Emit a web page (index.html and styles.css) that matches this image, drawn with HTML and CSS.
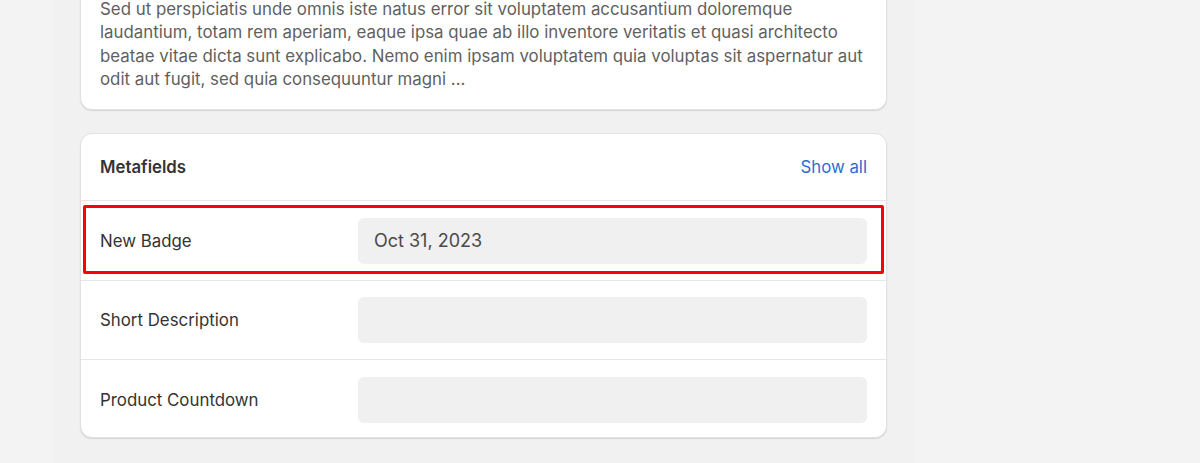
FILE: index.html
```html
<!DOCTYPE html>
<html lang="en">
<head>
<meta charset="utf-8">
<title>Metafields</title>
<link rel="stylesheet" href="styles.css">
</head>
<body>
<div class="page">
  <main class="main">
    <section class="card card-desc">
      <p class="desc">Sed ut perspiciatis unde omnis iste natus error sit voluptatem accusantium doloremque laudantium, totam rem aperiam, eaque ipsa quae ab illo inventore veritatis et quasi architecto beatae vitae dicta sunt explicabo. Nemo enim ipsam voluptatem quia voluptas sit aspernatur aut odit aut fugit, sed quia consequuntur magni ...</p>
    </section>
    <section class="card card-meta">
      <header class="meta-head">
        <h2 class="meta-title">Metafields</h2>
        <a class="show-all" href="#">Show all</a>
      </header>
      <div class="meta-row highlighted">
        <span class="meta-label">New Badge</span>
        <div class="meta-input">Oct 31, 2023</div>
        <div class="highlight-box"></div>
      </div>
      <div class="meta-row">
        <span class="meta-label">Short Description</span>
        <div class="meta-input"></div>
      </div>
      <div class="meta-row">
        <span class="meta-label">Product Countdown</span>
        <div class="meta-input"></div>
      </div>
    </section>
  </main>
</div>
</body>
</html>
```

FILE: styles.css
```css
* { box-sizing: border-box; }
html, body {
  margin: 0;
  padding: 0;
  height: 100%;
}
body {
  background: #f3f3f3;
  font-family: Inter, "Noto Sans", sans-serif;
  color: #303030;
  overflow: hidden;
}
.page {
  display: flex;
  height: 100%;
}
.main {
  margin-left: 53px;
  width: 860px;
  background: #f1f1f1;
  padding: 0 26px 0 27px;
  display: flex;
  flex-direction: column;
  gap: 23px;
  margin-top: -20px;
}
.card {
  background: #ffffff;
  border: 1px solid #e1e1e1;
  border-radius: 12px;
  box-shadow: 0 1px 1px rgba(0,0,0,0.12);
}
.card-desc {
  padding: 0 19px 18px 19px;
  border-top-left-radius: 0;
  border-top-right-radius: 0;
  border-top: none;
}
.desc {
  margin: 0;
  padding-top: 18px;
  font-size: 16.85px;
  line-height: 23.33px;
  color: #5f5f5f;
}
.card-meta {
  position: relative;
}
.meta-head {
  height: 67px;
  display: flex;
  align-items: center;
  justify-content: space-between;
  padding: 0 19px;
  border-bottom: 1px solid #e6e6e6;
}
.meta-title {
  margin: 0;
  font-size: 16.8px;
  font-weight: 600;
  color: #333333;
}
.show-all {
  font-size: 16.8px;
  color: #2b6ed3;
  text-decoration: none;
}
.meta-row {
  position: relative;
  display: grid;
  grid-template-columns: 258px 1fr;
  align-items: center;
  padding: 16.25px 19px;
  border-bottom: 1px solid #e6e6e6;
}
.meta-row:last-child {
  border-bottom: none;
  padding-bottom: 14.5px;
}
.meta-label {
  font-size: 16.85px;
  color: #333333;
}
.meta-input {
  height: 46px;
  border-radius: 6px;
  background: #f0f0f0;
  padding: 0 16px;
  display: flex;
  align-items: center;
  font-size: 18px;
  color: #4a4a4a;
}
.highlight-box {
  position: absolute;
  left: 2px;
  right: 2px;
  top: 4px;
  bottom: 6px;
  border: 3px solid #ff0000;
  border-radius: 2px;
  pointer-events: none;
}
```
